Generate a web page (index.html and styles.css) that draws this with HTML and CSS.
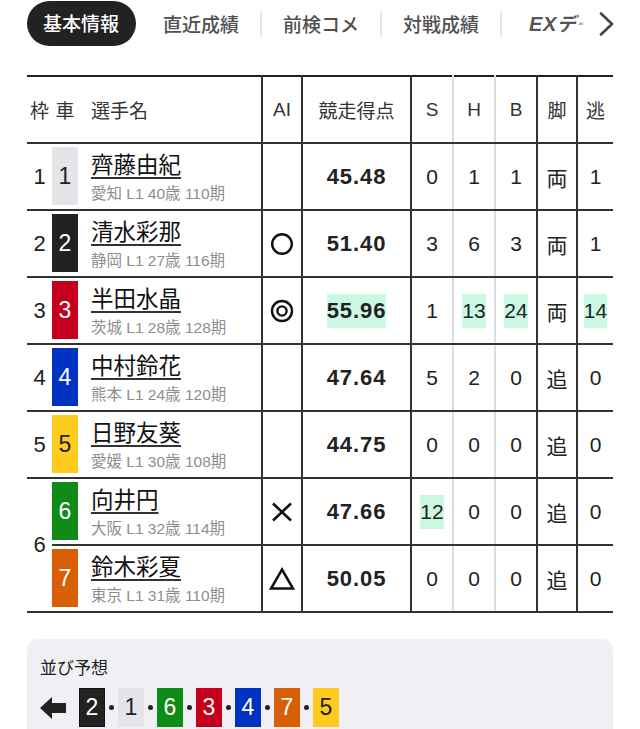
FILE: index.html
```html
<!DOCTYPE html>
<html lang="ja">
<head>
<meta charset="utf-8">
<title>基本情報</title>
<link rel="stylesheet" href="styles.css">
</head>
<body>
<nav class="tabs">
  <span class="tab active">基本情報</span>
  <span class="tab first">直近成績</span>
  <span class="sep"></span>
  <span class="tab">前検コメ</span>
  <span class="sep"></span>
  <span class="tab">対戦成績</span>
  <span class="sep"></span>
  <span class="tab ex"><b>EX</b>データ</span>
  <span class="more"><svg width="16" height="24" viewBox="0 0 16 24"><polyline points="2,1.5 13,12 2,22.5" fill="none" stroke="#444" stroke-width="2.6" stroke-linecap="round" stroke-linejoin="round"/></svg></span>
</nav>

<table class="entries">
  <colgroup>
    <col class="c-waku"><col class="c-sha"><col class="c-name"><col class="c-ai"><col class="c-score"><col class="c-s"><col class="c-h"><col class="c-b"><col class="c-kyaku"><col class="c-nige">
  </colgroup>
  <thead>
    <tr>
      <th class="waku">枠</th><th class="sha">車</th><th class="name-h">選手名</th><th class="ai">AI</th><th class="score-h">競走得点</th><th class="s">S</th><th class="h">H</th><th class="b">B</th><th class="kyaku">脚</th><th class="nige">逃</th>
    </tr>
  </thead>
  <tbody>
    <tr>
      <td class="waku">1</td>
      <td class="sha"><span class="car c1">1</span></td>
      <td class="name"><span class="pname">齊藤由紀</span><span class="meta">愛知 L1 40歳 110期</span></td>
      <td class="ai"></td>
      <td class="score">45.48</td>
      <td class="s">0</td><td class="h">1</td><td class="b">1</td><td class="kyaku">両</td><td class="nige">1</td>
    </tr>
    <tr>
      <td class="waku">2</td>
      <td class="sha"><span class="car c2">2</span></td>
      <td class="name"><span class="pname">清水彩那</span><span class="meta">静岡 L1 27歳 116期</span></td>
      <td class="ai"><svg width="24" height="24" viewBox="0 0 24 24"><circle cx="12" cy="12" r="9.8" fill="none" stroke="#111" stroke-width="2.4"/></svg></td>
      <td class="score">51.40</td>
      <td class="s">3</td><td class="h">6</td><td class="b">3</td><td class="kyaku">両</td><td class="nige">1</td>
    </tr>
    <tr>
      <td class="waku">3</td>
      <td class="sha"><span class="car c3">3</span></td>
      <td class="name"><span class="pname">半田水晶</span><span class="meta">茨城 L1 28歳 128期</span></td>
      <td class="ai"><svg width="24" height="24" viewBox="0 0 24 24"><circle cx="12" cy="12" r="10" fill="none" stroke="#111" stroke-width="2.4"/><circle cx="12" cy="12" r="4.6" fill="none" stroke="#111" stroke-width="2.4"/></svg></td>
      <td class="score"><span class="hl">55.96</span></td>
      <td class="s">1</td><td class="h"><span class="hl">13</span></td><td class="b"><span class="hl">24</span></td><td class="kyaku">両</td><td class="nige"><span class="hl">14</span></td>
    </tr>
    <tr>
      <td class="waku">4</td>
      <td class="sha"><span class="car c4">4</span></td>
      <td class="name"><span class="pname">中村鈴花</span><span class="meta">熊本 L1 24歳 120期</span></td>
      <td class="ai"></td>
      <td class="score">47.64</td>
      <td class="s">5</td><td class="h">2</td><td class="b">0</td><td class="kyaku">追</td><td class="nige">0</td>
    </tr>
    <tr>
      <td class="waku">5</td>
      <td class="sha"><span class="car c5">5</span></td>
      <td class="name"><span class="pname">日野友葵</span><span class="meta">愛媛 L1 30歳 108期</span></td>
      <td class="ai"></td>
      <td class="score">44.75</td>
      <td class="s">0</td><td class="h">0</td><td class="b">0</td><td class="kyaku">追</td><td class="nige">0</td>
    </tr>
    <tr>
      <td class="waku" rowspan="2">6</td>
      <td class="sha"><span class="car c6">6</span></td>
      <td class="name"><span class="pname">向井円</span><span class="meta">大阪 L1 32歳 114期</span></td>
      <td class="ai"><svg width="24" height="24" viewBox="0 0 24 24"><path d="M3 3.5 L21 20.5 M21 3.5 L3 20.5" fill="none" stroke="#111" stroke-width="2.6"/></svg></td>
      <td class="score">47.66</td>
      <td class="s"><span class="hl">12</span></td><td class="h">0</td><td class="b">0</td><td class="kyaku">追</td><td class="nige">0</td>
    </tr>
    <tr>
      <td class="sha"><span class="car c7">7</span></td>
      <td class="name"><span class="pname">鈴木彩夏</span><span class="meta">東京 L1 31歳 110期</span></td>
      <td class="ai"><svg width="26" height="24" viewBox="0 0 26 24"><polygon points="13,2.5 24,21.5 2,21.5" fill="none" stroke="#111" stroke-width="2.5"/></svg></td>
      <td class="score">50.05</td>
      <td class="s">0</td><td class="h">0</td><td class="b">0</td><td class="kyaku">追</td><td class="nige">0</td>
    </tr>
  </tbody>
</table>

<section class="lineup">
  <h2 class="lineup-title">並び予想</h2>
  <div class="lineup-row">
    <svg class="arrow" width="26" height="22" viewBox="0 0 26 22"><polygon points="0,11 12,0 12,6 26,6 26,16 12,16 12,22" fill="#222"/></svg>
    <span class="lbox c2">2</span><span class="dot"></span>
    <span class="lbox c1">1</span><span class="dot"></span>
    <span class="lbox c6">6</span><span class="dot"></span>
    <span class="lbox c3">3</span><span class="dot"></span>
    <span class="lbox c4">4</span><span class="dot"></span>
    <span class="lbox c7">7</span><span class="dot"></span>
    <span class="lbox c5">5</span>
  </div>
</section>
</body>
</html>
```

FILE: styles.css
```css
* { box-sizing: border-box; margin: 0; padding: 0; }

html, body {
  background: #fff;
}

body {
  margin: 0;
  width: 640px;
  overflow: hidden;
  font-family: "Liberation Sans", "Noto Sans CJK JP", sans-serif;
  color: #222;
}

/* Tabs */
.tabs {
  position: relative;
  display: flex;
  align-items: center;
  height: 47px;
  padding-left: 27px;
  white-space: nowrap;
  overflow: hidden;
}

.tab {
  flex: none;
  padding: 0 21px;
  font-family: "Noto Sans CJK JP", sans-serif;
  font-size: 19px;
  font-weight: 500;
  color: #505050;
  line-height: 44px;
}

.tab.active {
  height: 45px;
  padding: 0 17px 0 16px;
  background: #222;
  color: #fff;
  border-radius: 23px;
}

.tab.first {
  margin-left: 6px;
}

.tab.ex {
  padding-left: 27px;
  font-weight: 700;
  font-style: italic;
  color: #555;
}

.tab.ex b {
  font-family: "Liberation Sans", sans-serif;
  font-weight: 700;
  font-size: 20px;
  letter-spacing: 0.5px;
}

.sep {
  flex: none;
  width: 2px;
  height: 26px;
  background: #e6e6ec;
}

.more {
  position: absolute;
  top: 0;
  right: 0;
  width: 64px;
  height: 47px;
  display: flex;
  align-items: center;
  padding-left: 23px;
  background: linear-gradient(to right, rgba(255,255,255,0) 0, #fff 9px);
}

/* Table */
.entries {
  margin: 28px 0 0 27px;
  width: 586px;
  table-layout: fixed;
  border-collapse: collapse;
}

.c-waku { width: 25px; }
.c-sha { width: 26px; }
.c-name { width: 184px; }
.c-ai { width: 40px; }
.c-score { width: 109px; }
.c-s { width: 42px; }
.c-h { width: 42px; }
.c-b { width: 42px; }
.c-kyaku { width: 40px; }
.c-nige { width: 36px; }

.entries thead tr {
  border-top: 2px solid #222;
}

.entries th,
.entries td {
  border-bottom: 2px solid #333;
  text-align: center;
  vertical-align: middle;
  padding: 0;
}

.entries th {
  height: 67px;
  font-family: "Noto Sans CJK JP", sans-serif;
  font-size: 19px;
  font-weight: 400;
  color: #333;
}

.entries th.ai,
.entries th.s,
.entries th.h,
.entries th.b {
  font-family: "Liberation Sans", sans-serif;
}

.entries td {
  height: 66.7px;
  font-size: 21px;
  color: #222;
}

.entries .name-h {
  text-align: left;
  padding-left: 13px;
}

.entries .ai {
  border-left: 2px solid #333;
  border-right: 2px solid #333;
}

.entries .ai svg {
  display: block;
  margin: 0 auto;
}

.entries .score-h,
.entries .score {
  border-right: 2px solid #333;
}

.entries .s,
.entries .h {
  border-right: 2px solid #dcdce6;
}

.entries .b,
.entries .kyaku {
  border-right: 2px solid #333;
}

.entries td.waku {
  font-size: 22px;
  color: #222;
}

.entries td.sha {
  padding: 3px 0 4px;
}

.car {
  display: flex;
  align-items: center;
  justify-content: center;
  width: 26px;
  height: 58px;
  font-size: 23px;
  color: #fff;
}

.c1 { background: #e4e4e9; color: #222; }
.c2 { background: #222; color: #fff; }
.c3 { background: #c6001c; color: #fff; }
.c4 { background: #0032c2; color: #fff; }
.c5 { background: #ffcb1f; color: #222; }
.c6 { background: #0f8c18; color: #fff; }
.c7 { background: #d85f06; color: #fff; }

.entries td.name {
  text-align: left;
  padding-left: 13px;
}

.pname {
  display: block;
  width: max-content;
  font-family: "Noto Sans CJK JP", sans-serif;
  font-size: 22.5px;
  line-height: 26px;
  color: #111;
  text-decoration: underline;
  text-decoration-thickness: 2px;
  text-underline-offset: 4px;
  text-decoration-color: #333;
}

.meta {
  display: block;
  margin-top: 8px;
  font-size: 15.5px;
  line-height: 20px;
  color: #8e8e8e;
  white-space: nowrap;
}

.entries td.score {
  font-weight: 700;
  font-size: 22px;
  letter-spacing: 0.9px;
  color: #222;
}

.entries td.kyaku {
  font-family: "Noto Sans CJK JP", sans-serif;
  font-size: 21px;
}

.hl {
  display: inline-block;
  line-height: 34px;
  background: #cbf8e2;
}

/* Lineup */
.lineup {
  margin: 26px 27px 0 27px;
  padding: 16px 13px 14px;
  background: #f0f0f4;
  border-radius: 10px;
}

.lineup-title {
  font-family: "Noto Sans CJK JP", sans-serif;
  font-size: 17px;
  font-weight: 400;
  line-height: 24px;
  color: #222;
}

.lineup-row {
  display: flex;
  align-items: center;
  margin-top: 9px;
}

.arrow {
  flex: none;
  margin-right: 13px;
}

.lbox {
  flex: none;
  display: flex;
  align-items: center;
  justify-content: center;
  width: 26px;
  height: 39px;
  font-size: 23px;
}

.lbox.c2 {
  border: 1px solid #111;
}

.dot {
  flex: none;
  position: relative;
  width: 13px;
  height: 39px;
}

.dot::after {
  content: "";
  position: absolute;
  left: 4px;
  top: 17px;
  width: 5px;
  height: 5px;
  border-radius: 50%;
  background: #222;
}
```
